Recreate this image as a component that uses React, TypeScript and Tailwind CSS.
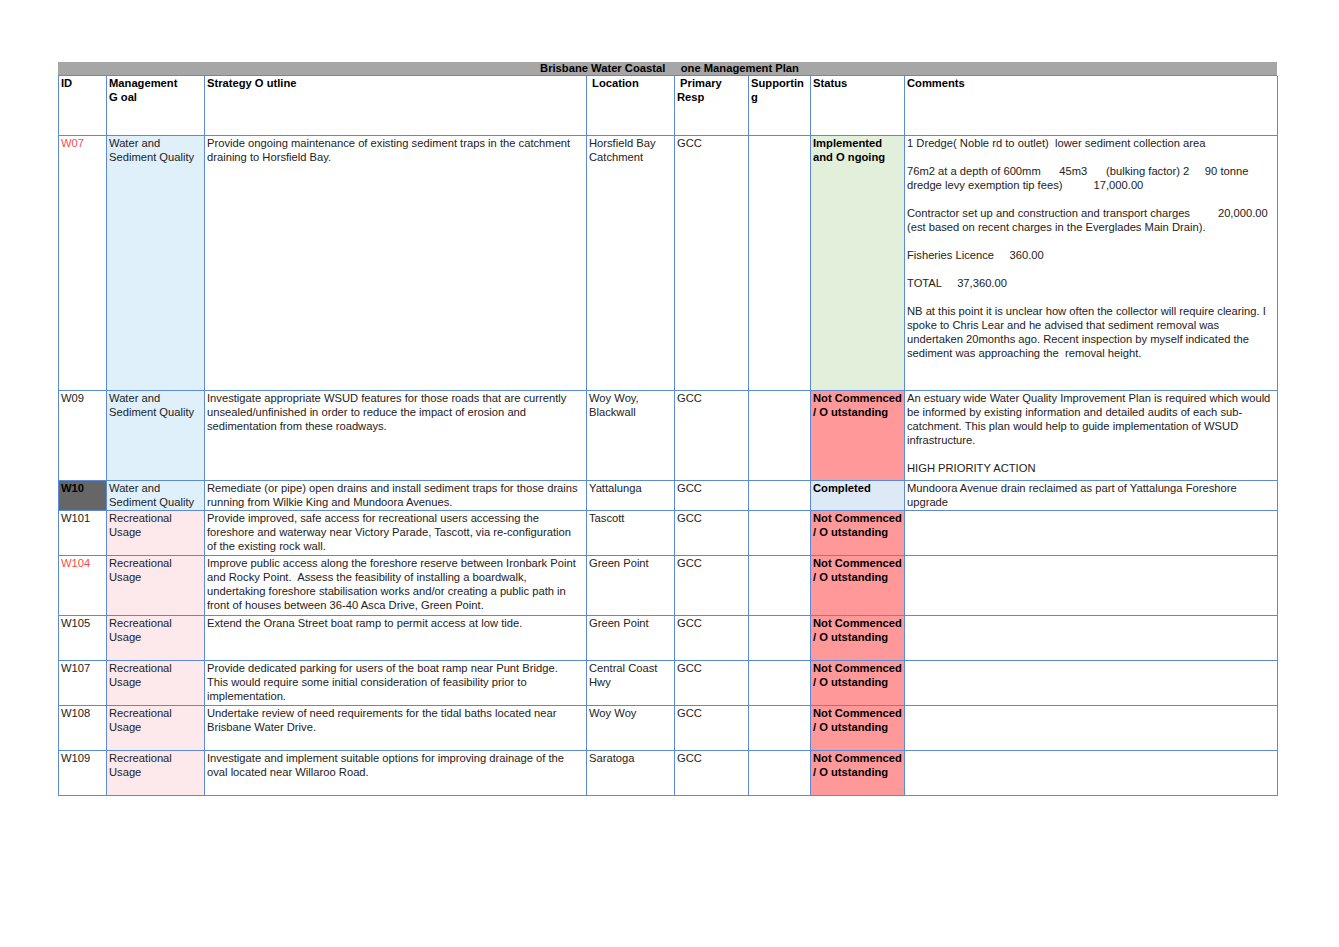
import React from "react";

type Row = {
  id: string;
  idClass?: string;
  goal: string;
  goalBg: string;
  strategy: string;
  location: string;
  status: string;
  statusBg: string;
  comments?: string;
  h: string;
};

const WATER = "bg-[#dff0fb]";
const REC = "bg-[#fde8eb]";
const RED = "bg-[#ff9999]";
const NC = "Not Commenced\n/ O utstanding";

const rows: Row[] = [
  {
    id: "W07",
    idClass: "text-[#ff4a4a]",
    goal: "Water and\nSediment Quality",
    goalBg: WATER,
    strategy:
      "Provide ongoing maintenance of existing sediment traps in the catchment\ndraining to Horsfield Bay.",
    location: "Horsfield Bay\nCatchment",
    status: "Implemented\nand O ngoing",
    statusBg: "bg-[#e2efda]",
    comments:
      "1 Dredge( Noble rd to outlet)  lower sediment collection area\n\n76m2 at a depth of 600mm      45m3      (bulking factor) 2     90 tonne\ndredge levy exemption tip fees)          17,000.00\n\nContractor set up and construction and transport charges         20,000.00\n(est based on recent charges in the Everglades Main Drain).\n\nFisheries Licence     360.00\n\nTOTAL     37,360.00\n\nNB at this point it is unclear how often the collector will require clearing. I\nspoke to Chris Lear and he advised that sediment removal was\nundertaken 20months ago. Recent inspection by myself indicated the\nsediment was approaching the  removal height.",
    h: "h-[255px]",
  },
  {
    id: "W09",
    goal: "Water and\nSediment Quality",
    goalBg: WATER,
    strategy:
      "Investigate appropriate WSUD features for those roads that are currently\nunsealed/unfinished in order to reduce the impact of erosion and\nsedimentation from these roadways.",
    location: "Woy Woy,\nBlackwall",
    status: NC,
    statusBg: RED,
    comments:
      "An estuary wide Water Quality Improvement Plan is required which would\nbe informed by existing information and detailed audits of each sub-\ncatchment. This plan would help to guide implementation of WSUD\ninfrastructure.\n\nHIGH PRIORITY ACTION",
    h: "h-[90px]",
  },
  {
    id: "W10",
    idClass: "bg-[#666666] font-bold text-black",
    goal: "Water and\nSediment Quality",
    goalBg: WATER,
    strategy:
      "Remediate (or pipe) open drains and install sediment traps for those drains\nrunning from Wilkie King and Mundoora Avenues.",
    location: "Yattalunga",
    status: "Completed",
    statusBg: "bg-[#dde9f5]",
    comments: "Mundoora Avenue drain reclaimed as part of Yattalunga Foreshore\nupgrade",
    h: "h-[30px]",
  },
  {
    id: "W101",
    goal: "Recreational\nUsage",
    goalBg: REC,
    strategy:
      "Provide improved, safe access for recreational users accessing the\nforeshore and waterway near Victory Parade, Tascott, via re-configuration\nof the existing rock wall.",
    location: "Tascott",
    status: NC,
    statusBg: RED,
    h: "h-[45px]",
  },
  {
    id: "W104",
    idClass: "text-[#ff4a4a]",
    goal: "Recreational\nUsage",
    goalBg: REC,
    strategy:
      "Improve public access along the foreshore reserve between Ironbark Point\nand Rocky Point.  Assess the feasibility of installing a boardwalk,\nundertaking foreshore stabilisation works and/or creating a public path in\nfront of houses between 36-40 Asca Drive, Green Point.",
    location: "Green Point",
    status: NC,
    statusBg: RED,
    h: "h-[60px]",
  },
  {
    id: "W105",
    goal: "Recreational\nUsage",
    goalBg: REC,
    strategy: "Extend the Orana Street boat ramp to permit access at low tide.",
    location: "Green Point",
    status: NC,
    statusBg: RED,
    h: "h-[45px]",
  },
  {
    id: "W107",
    goal: "Recreational\nUsage",
    goalBg: REC,
    strategy:
      "Provide dedicated parking for users of the boat ramp near Punt Bridge.\nThis would require some initial consideration of feasibility prior to\nimplementation.",
    location: "Central Coast\nHwy",
    status: NC,
    statusBg: RED,
    h: "h-[45px]",
  },
  {
    id: "W108",
    goal: "Recreational\nUsage",
    goalBg: REC,
    strategy:
      "Undertake review of need requirements for the tidal baths located near\nBrisbane Water Drive.",
    location: "Woy Woy",
    status: NC,
    statusBg: RED,
    h: "h-[45px]",
  },
  {
    id: "W109",
    goal: "Recreational\nUsage",
    goalBg: REC,
    strategy:
      "Investigate and implement suitable options for improving drainage of the\noval located near Willaroo Road.",
    location: "Saratoga",
    status: NC,
    statusBg: RED,
    h: "h-[45px]",
  },
];

const cell =
  "border-r border-b border-[#5b8ad9] px-[2px] pt-0 whitespace-pre-wrap overflow-hidden";

export default function App() {
  return (
    <div
      className="min-h-[947px] w-[1339px] bg-white pl-[58px] pt-[62px] text-[11.2px] leading-[14px] text-[#222]"
      style={{ fontFamily: '"Liberation Sans", Arial, sans-serif' }}
    >
      <div className="w-[1219px]">
        <div className="flex h-[13px] items-center justify-center bg-[#a6a6a6] pl-[4px] text-[11.2px] font-bold leading-[13px] text-black whitespace-pre">
          {"Brisbane Water Coastal     one Management Plan"}
        </div>
        <div className="grid grid-cols-[48px_98px_382px_88px_74px_62px_94px_373px] border-l border-t border-[#5b8ad9]">
          {/* header */}
          <div className={`${cell} h-[60px] font-bold text-black`}>ID</div>
          <div className={`${cell} font-bold text-black`}>{"Management\nG oal"}</div>
          <div className={`${cell} font-bold text-black`}>Strategy O utline</div>
          <div className={`${cell} font-bold text-black`}>{" Location"}</div>
          <div className={`${cell} font-bold text-black`}>{" Primary\nResp"}</div>
          <div className={`${cell} font-bold text-black`}>{"Supportin\ng"}</div>
          <div className={`${cell} font-bold text-black`}>Status</div>
          <div className={`${cell} font-bold text-black`}>Comments</div>

          {rows.map((r) => (
            <React.Fragment key={r.id}>
              <div className={`${cell} ${r.h} ${r.idClass ?? ""}`}>{r.id}</div>
              <div className={`${cell} ${r.goalBg}`}>{r.goal}</div>
              <div className={cell}>{r.strategy}</div>
              <div className={cell}>{r.location}</div>
              <div className={cell}>GCC</div>
              <div className={cell}></div>
              <div className={`${cell} ${r.statusBg} font-bold text-black`}>{r.status}</div>
              <div className={cell}>{r.comments ?? ""}</div>
            </React.Fragment>
          ))}
        </div>
      </div>
    </div>
  );
}
